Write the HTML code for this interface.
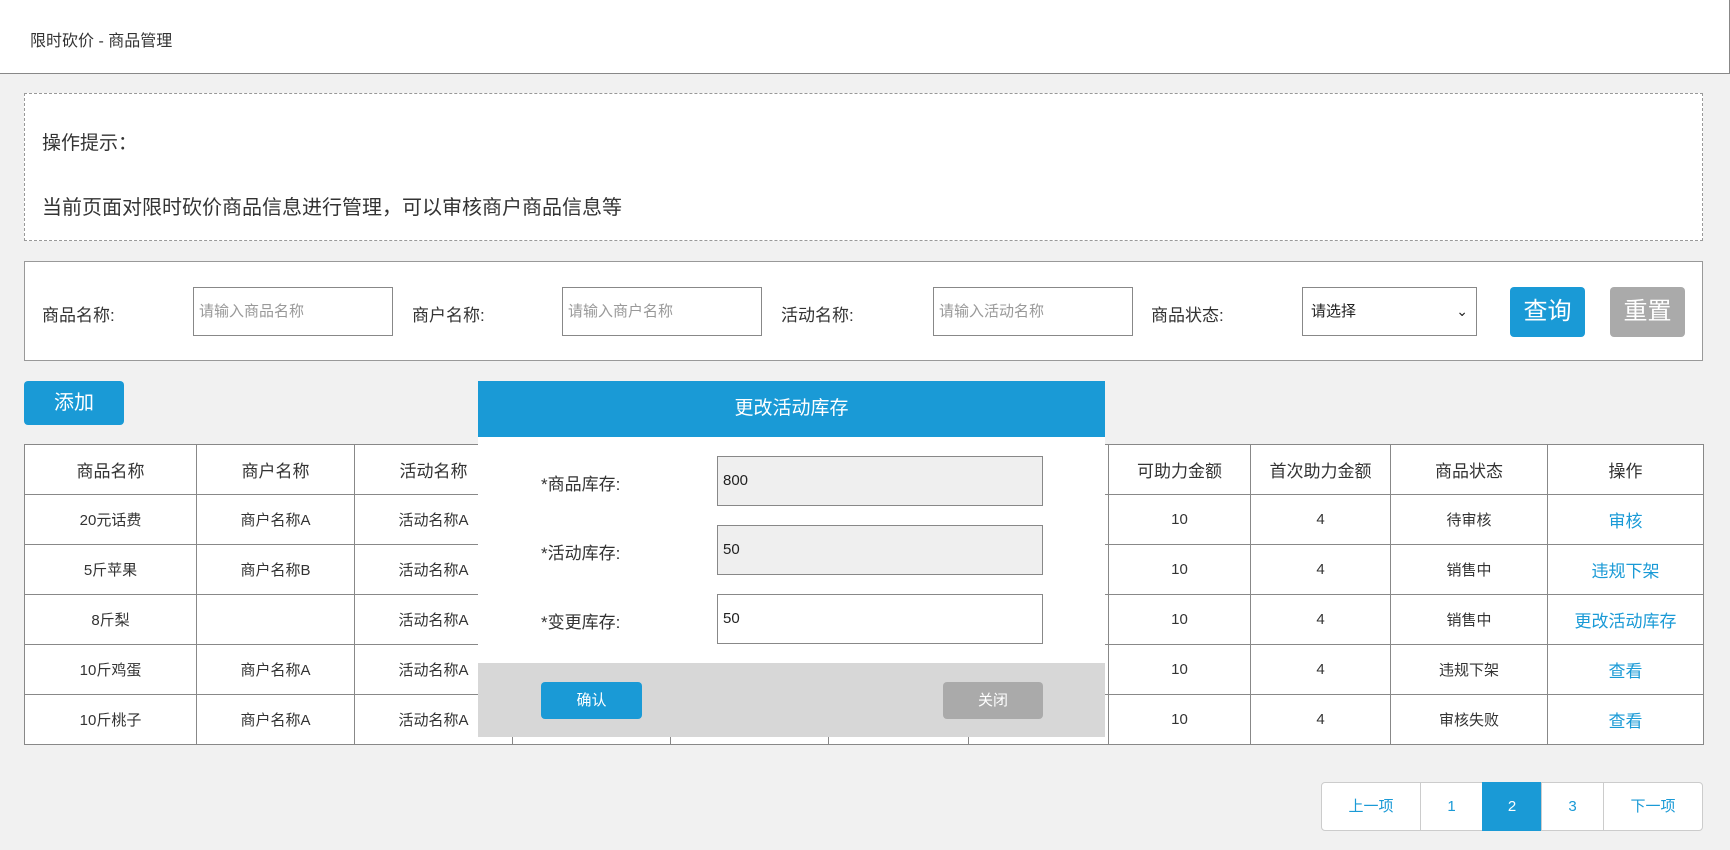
<!DOCTYPE html>
<html><head><meta charset="utf-8"><style>
*{box-sizing:border-box;margin:0;padding:0}
body{width:1730px;height:850px;background:#f1f1f1;font-family:"Liberation Sans","Noto Sans CJK SC",sans-serif;color:#333;position:relative;overflow:hidden}
.abs{position:absolute}
.hdr{left:0;top:0;width:1730px;height:74px;background:#fff;border-bottom:1px solid #888;border-right:1px solid #888}
.tip{left:24px;top:93px;width:1679px;height:148px;border:1px dashed #999;background:#fff}
.srch{left:24px;top:261px;width:1679px;height:100px;border:1px solid #999;background:#fff}
.lbl{font-size:17px;color:#333}
.inp{height:49px;width:200px;border:1px solid #888;background:#fff;font-size:15px;color:#999;padding-left:5px;line-height:47px}
.btn{color:#fff;border-radius:4px;text-align:center}
table{border-collapse:collapse;position:absolute;left:24px;top:444px;background:#fff;table-layout:fixed;width:1679px}
td{border:1px solid #888;height:50px;text-align:center;font-size:15px;color:#333}
tr:first-child td{font-size:17px}
.lnk{color:#1a9ad6;font-size:17px}
.pg{top:782px;height:49px;border:1px solid #ccc;background:#fff;color:#1a9ad6;font-size:15px;text-align:center;line-height:47px}
</style></head><body>
<div class="abs hdr"><div class="abs" style="left:30px;top:27px;font-size:16px">限时砍价 - 商品管理</div></div>
<div class="abs tip">
<div class="abs" style="left:17px;top:34px;font-size:19px">操作提示：</div>
<div class="abs" style="left:17px;top:97px;font-size:20px">当前页面对限时砍价商品信息进行管理，可以审核商户商品信息等</div>
</div>
<div class="abs srch"></div>
<div class="abs lbl" style="left:42px;top:301px">商品名称:</div>
<div class="abs inp" style="left:193px;top:287px">请输入商品名称</div>
<div class="abs lbl" style="left:412px;top:301px">商户名称:</div>
<div class="abs inp" style="left:562px;top:287px">请输入商户名称</div>
<div class="abs lbl" style="left:781px;top:301px">活动名称:</div>
<div class="abs inp" style="left:933px;top:287px">请输入活动名称</div>
<div class="abs lbl" style="left:1151px;top:301px">商品状态:</div>
<div class="abs inp" style="left:1302px;top:287px;width:175px;color:#222;padding-left:8px">请选择<span class="abs" style="right:8px;top:0;font-size:14px">&#8964;</span></div>
<div class="abs btn" style="left:1510px;top:287px;width:75px;height:50px;background:#1a9ad6;font-size:24px;line-height:50px">查询</div>
<div class="abs btn" style="left:1610px;top:287px;width:75px;height:50px;background:#aaa;font-size:24px;line-height:50px">重置</div>
<div class="abs btn" style="left:24px;top:381px;width:100px;height:44px;background:#1a9ad6;font-size:20px;line-height:44px">添加</div>
<table>
<colgroup><col style="width:172px"><col style="width:158px"><col style="width:158px"><col style="width:158px"><col style="width:158px"><col style="width:140px"><col style="width:140px"><col style="width:142px"><col style="width:140px"><col style="width:157px"><col style="width:156px"></colgroup>
<tr><td>商品名称</td><td>商户名称</td><td>活动名称</td><td></td><td></td><td></td><td></td><td>可助力金额</td><td>首次助力金额</td><td>商品状态</td><td>操作</td></tr>
<tr><td>20元话费</td><td>商户名称A</td><td>活动名称A</td><td></td><td></td><td></td><td></td><td>10</td><td>4</td><td>待审核</td><td class="lnk">审核</td></tr>
<tr><td>5斤苹果</td><td>商户名称B</td><td>活动名称A</td><td></td><td></td><td></td><td></td><td>10</td><td>4</td><td>销售中</td><td class="lnk">违规下架</td></tr>
<tr><td>8斤梨</td><td></td><td>活动名称A</td><td></td><td></td><td></td><td></td><td>10</td><td>4</td><td>销售中</td><td class="lnk">更改活动库存</td></tr>
<tr><td>10斤鸡蛋</td><td>商户名称A</td><td>活动名称A</td><td></td><td></td><td></td><td></td><td>10</td><td>4</td><td>违规下架</td><td class="lnk">查看</td></tr>
<tr><td>10斤桃子</td><td>商户名称A</td><td>活动名称A</td><td></td><td></td><td></td><td></td><td>10</td><td>4</td><td>审核失败</td><td class="lnk">查看</td></tr>
</table>
<div class="abs" style="left:478px;top:381px;width:627px;height:356px;background:#fff">
<div class="abs" style="left:0;top:0;width:627px;height:56px;background:#1a9ad6;color:#fff;font-size:19px;text-align:center;line-height:56px">更改活动库存</div>
<div class="abs lbl" style="left:63px;top:89px">*商品库存:</div>
<div class="abs lbl" style="left:63px;top:158px">*活动库存:</div>
<div class="abs lbl" style="left:63px;top:227px">*变更库存:</div>
<div class="abs inp" style="left:239px;top:75px;width:326px;height:50px;background:#efefef;color:#222;line-height:48px">800</div>
<div class="abs inp" style="left:239px;top:144px;width:326px;height:50px;background:#efefef;color:#222;line-height:48px">50</div>
<div class="abs inp" style="left:239px;top:213px;width:326px;height:50px;color:#222;line-height:48px">50</div>
<div class="abs" style="left:0;top:282px;width:627px;height:74px;background:#d7d7d7">
<div class="abs btn" style="left:63px;top:19px;width:101px;height:37px;background:#1a9ad6;font-size:15px;line-height:37px">确认</div>
<div class="abs btn" style="left:465px;top:19px;width:100px;height:37px;background:#aaa;font-size:15px;line-height:37px">关闭</div>
</div>
</div>
<div class="abs pg" style="left:1321px;width:100px;border-radius:4px 0 0 4px">上一项</div>
<div class="abs pg" style="left:1420px;width:63px">1</div>
<div class="abs pg" style="left:1482px;width:60px;background:#1a9ad6;color:#fff;border-color:#1a9ad6">2</div>
<div class="abs pg" style="left:1541px;width:63px">3</div>
<div class="abs pg" style="left:1603px;width:100px;border-radius:0 4px 4px 0">下一项</div>
</body></html>
